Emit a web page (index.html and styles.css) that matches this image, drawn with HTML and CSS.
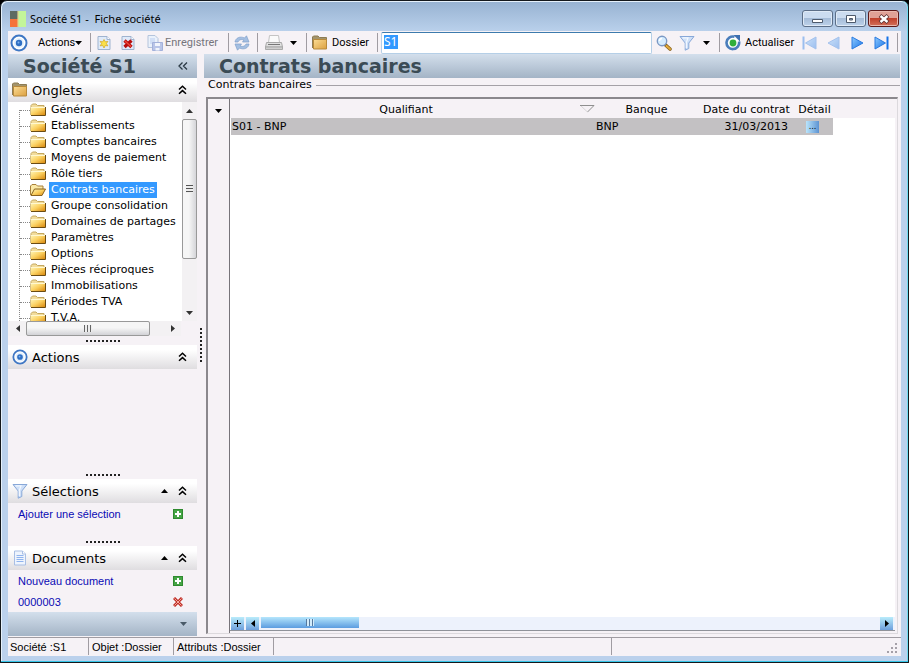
FILE: index.html
```
<!DOCTYPE html>
<html lang="fr">
<head>
    <meta charset="UTF-8">
    <meta name="viewport" content="width=device-width, initial-scale=1.0">
    <title>Société S1 - Fiche société</title>
    <link rel="stylesheet" href="styles.css">
</head>
<body>
<svg class="defs" aria-hidden="true">
    <defs>
        <linearGradient id="gold" x1="0" y1="0" x2="1" y2="1"><stop offset="0" stop-color="#fff6b8"/><stop offset=".5" stop-color="#fbd060"/><stop offset="1" stop-color="#d98a10"/></linearGradient>
        <linearGradient id="gold2" x1="0" y1="0" x2="1" y2="1"><stop offset="0" stop-color="#fbdc94"/><stop offset="1" stop-color="#dca040"/></linearGradient>
        <linearGradient id="nav" x1="0" y1="0" x2="1" y2="1"><stop offset="0" stop-color="#8fcbff"/><stop offset="1" stop-color="#1672e6"/></linearGradient>
        <symbol id="folder" viewBox="0 0 16 14">
            <path d="M1 12V2.500L2.500 1H6L7.500 2.500H14V5H1Z" fill="#f2dc9c" stroke="#c4a860"/>
            <path d="M1 4h14v8H1z" fill="url(#gold)"/>
            <path d="M1 4.500h14" stroke="#fff8d0"/>
            <path d="M1 12.500h14.500V4" fill="none" stroke="#6b4c12"/>
        </symbol>
        <symbol id="folder-open" viewBox="0 0 16 14">
            <path d="M.5 12V3L2 1.500h4L7.500 3h5.500v3" fill="#fbe9a6" stroke="#a8803a"/>
            <path d="M1 12.500L4.500 6H15.500L12 12.500Z" fill="url(#gold)" stroke="#8a6420"/>
        </symbol>
        <symbol id="folder-big" viewBox="0 0 16 16">
            <path d="M.5 13V2L1.500 1h4.500L7.500 2.500h7V6" fill="#a3946c" stroke="#8d7c54"/>
            <path d="M1.500 4.500h13v9.500h-13z" fill="url(#gold2)" stroke="#b88a3c"/>
        </symbol>
        <symbol id="target" viewBox="0 0 18 18">
            <circle cx="9" cy="9" r="7.500" fill="#fff" stroke="#3f77c4" stroke-width="2"/>
            <circle cx="9" cy="9" r="5" fill="#e4f0fc"/>
            <circle cx="9" cy="9" r="3.200" fill="#2f6fc4"/>
            <circle cx="8.500" cy="8.500" r="1" fill="#7fb3ee"/>
        </symbol>
        <symbol id="funnel" viewBox="0 0 16 16">
            <path d="M1 1.500H15L9.800 8V13.500L6.200 15.200V8Z" fill="#cfe0f8" stroke="#88a8d8"/>
            <path d="M3.500 2.800H9L7.300 7.500V13" fill="none" stroke="#f4f9ff" stroke-width="1.200"/>
        </symbol>
        <symbol id="plus" viewBox="0 0 10 10">
            <path d="M0 0h10v10H0z" fill="#2f8a2f"/>
            <path d="M1 1h8v8H1z" fill="#45a545"/>
            <path d="M5 2v6M2 5h6" stroke="#fff" stroke-width="2"/>
        </symbol>
        <symbol id="collapse" viewBox="0 0 9 10">
            <path d="M1 4.500L4.500 1.300L8 4.500M1 8.800L4.500 5.600L8 8.800" fill="none" stroke="#000" stroke-width="1.500"/>
        </symbol>
        <symbol id="up" viewBox="0 0 7 4"><path d="M0 4L3.500 0L7 4Z"/></symbol>
        <symbol id="down" viewBox="0 0 7 4"><path d="M0 0H7L3.500 4Z"/></symbol>
        <symbol id="left" viewBox="0 0 4 7"><path d="M4 0V7L0 3.500Z"/></symbol>
        <symbol id="right" viewBox="0 0 4 7"><path d="M0 0V7L4 3.500Z"/></symbol>
    </defs>
</svg>

<div class="window">
    <header class="titlebar">
        <svg class="logo" viewBox="0 0 16 16">
            <path d="M0 0h8v8H0z" fill="#5f6b62"/>
            <path d="M0 8h8v8H0z" fill="#f5733b"/>
            <path d="M8 0h8v16H8z" fill="#c3f59a"/>
            <path d="M7 0h2v16H7z" fill="#e3cf8c" opacity=".6"/>
        </svg>
        <span class="title">Société S1 -&nbsp; Fiche société</span>
        <div class="win_buttons">
            <button class="win_button" aria-label="Réduire"><svg width="12" height="12" viewBox="0 0 12 12"><path d="M.5 6.500h10v3H.5z" fill="#fff" stroke="#4d5a6c"/></svg></button>
            <button class="win_button" aria-label="Agrandir"><svg width="12" height="12" viewBox="0 0 12 12"><path d="M1.500 2.500h9v7h-9z" fill="#fff" stroke="#4d5a6c"/><path d="M4.500 5.500h3v1.500h-3z" fill="#9ab" stroke="#4d5a6c"/></svg></button>
            <button class="win_button close" aria-label="Fermer"><svg width="12" height="12" viewBox="0 0 12 12"><path d="M2 2.500L10 9.500M10 2.500L2 9.500" stroke="#5b3030" stroke-width="4"/><path d="M2.500 3L9.500 9M9.500 3L2.500 9" stroke="#fff" stroke-width="2.400"/></svg></button>
        </div>
    </header>

    <div class="client">
        <nav class="toolbar">
            <button class="tool target" aria-label="Cible"><svg width="18" height="18"><use href="#target"/></svg></button>
            <button class="tool actions_menu">Actions<svg width="7" height="4"><use href="#down"/></svg></button>
            <span class="sep"></span>
            <button class="tool" aria-label="Nouveau"><svg width="16" height="16" viewBox="0 0 16 16"><path d="M2 1.500h9l3 3v10H2z" fill="#dfeafa" stroke="#9fb3cf"/><path d="M11 1.500v3h3" fill="#fff" stroke="#9fb3cf"/><path d="M8 4.500l1.300 2.300 2.600-.4-1.500 2.200 1.500 2.300-2.600-.4L8 13l-1.300-2.500-2.600.4 1.500-2.300-1.500-2.200 2.600.4z" fill="#fbe04a" stroke="#d0a521" stroke-width=".7"/></svg></button>
            <button class="tool" aria-label="Supprimer"><svg width="16" height="16" viewBox="0 0 16 16"><path d="M2 1.500h9l3 3v10H2z" fill="#dfeafa" stroke="#9fb3cf"/><path d="M11 1.500v3h3" fill="#fff" stroke="#9fb3cf"/><path d="M4.500 5.500l7 6.500M11.500 5.500l-7 6.500" stroke="#b80f0f" stroke-width="3.400"/><path d="M5 6l6 5.500" stroke="#f04a3a" stroke-width="1.400"/></svg></button>
            <button class="tool save"><svg width="16" height="16" viewBox="0 0 16 16"><path d="M1 .5h7l3 3v9H1z" fill="#eaf1fb" stroke="#b4c4dc"/><path d="M3 4h5M3 6h5M3 8h3" stroke="#b9cdf0"/><path d="M5.500 7.500h10v8h-10z" fill="#b9c5e8" stroke="#a3b1da"/><path d="M8 8h5v3H8zM8.500 13h4v2.500h-4z" fill="#f2f5fc"/></svg>Enregistrer</button>
            <span class="sep"></span>
            <button class="tool refresh" aria-label="Rafraîchir"><svg width="16" height="16" viewBox="0 0 16 16"><path d="M1 7C1.500 3 6 .8 10.500 3L12.500 .8 15 7H8.500L10 5C7 3.800 4.500 5 4 7Z" fill="#a4bfe2" stroke="#7f9fca" stroke-width=".7"/><path d="M15 9C14.500 13 10 15.200 5.500 13L3.500 15.200 1 9H7.500L6 11C9 12.200 11.500 11 12 9Z" fill="#a4bfe2" stroke="#7f9fca" stroke-width=".7"/></svg></button>
            <span class="sep"></span>
            <button class="tool print" aria-label="Imprimer"><svg width="18" height="16" viewBox="0 0 18 16"><path d="M4.500 .5h9l1 7h-11z" fill="#fafafa" stroke="#c4c4c4"/><path d="M1.500 7.500h15l1 4.500H.5z" fill="#e0e0e0" stroke="#a8a8a8"/><path d="M3 9.500h12" stroke="#777"/><path d="M.5 12h17v2.500H.5z" fill="#cfcfcf" stroke="#aaa"/></svg><svg width="7" height="4"><use href="#down"/></svg></button>
            <span class="sep"></span>
            <button class="tool folder_button"><svg width="16" height="16"><use href="#folder-big"/></svg>Dossier</button>
            <span class="sep"></span>
            <label class="search"><input type="text" value="S1" aria-label="Recherche"></label>
            <button class="tool find" aria-label="Rechercher"><svg width="16" height="16" viewBox="0 0 16 16"><path d="M9 9.500l5 4.500" stroke="#8a6420" stroke-width="3.600" stroke-linecap="round"/><path d="M10.500 11l3.500 3" stroke="#e2aa3a" stroke-width="2" stroke-linecap="round"/><circle cx="6" cy="6" r="4.700" fill="#d4ecff" stroke="#7b98c4" stroke-width="1.400"/><path d="M3.500 6A2.500 2.500 0 0 1 6 3.500" fill="none" stroke="#fff" stroke-width="1.300"/></svg></button>
            <button class="tool filter" aria-label="Filtrer"><svg width="16" height="16"><use href="#funnel"/></svg><svg width="7" height="4"><use href="#down"/></svg></button>
            <span class="sep"></span>
            <button class="tool reload"><svg width="16" height="16" viewBox="0 0 16 16"><path d="M9.500 1.700A6.300 6.300 0 1 0 14 6.500" fill="#fff" stroke="#4a7dbb" stroke-width="2.600"/><path d="M8.500 0H15V6.500Z" fill="#3c6fb0"/><circle cx="8" cy="8" r="3.400" fill="#2fae3b"/></svg>Actualiser</button>
            <div class="nav_buttons">
                <button class="tool nav off" aria-label="Premier"><svg width="15" height="14" viewBox="0 0 15 14"><path d="M1.500 .5v13" stroke="#1672e6" stroke-width="2"/><path d="M14 1v12L3.500 7z" fill="url(#nav)" stroke="#2b7be0"/></svg></button>
                <button class="tool nav off" aria-label="Précédent"><svg width="15" height="14" viewBox="0 0 15 14"><path d="M13 1v12L2 7z" fill="url(#nav)" stroke="#2b7be0"/></svg></button>
                <button class="tool nav" aria-label="Suivant"><svg width="15" height="14" viewBox="0 0 15 14"><path d="M2 1v12l11-6z" fill="url(#nav)" stroke="#2b7be0"/></svg></button>
                <button class="tool nav" aria-label="Dernier"><svg width="15" height="14" viewBox="0 0 15 14"><path d="M1 1v12l10.500-6z" fill="url(#nav)" stroke="#2b7be0"/><path d="M13.500 .5v13" stroke="#1672e6" stroke-width="2"/></svg></button>
            </div>
            <span class="sep last"></span>
        </nav>

        <div class="content">
            <aside class="sidebar">
                <div class="band"><h1>Société S1</h1><button class="fold" aria-label="Replier"><svg width="10" height="8" viewBox="0 0 10 8"><path d="M4.500 .5L1 4l3.500 3.500M9 .5L5.500 4 9 7.500" fill="none" stroke="#2b3a45" stroke-width="1.300"/></svg></button></div>

                <section class="panel onglets">
                    <h2 class="panel_head"><svg width="16" height="16"><use href="#folder-big"/></svg>Onglets<svg class="end" width="9" height="10"><use href="#collapse"/></svg></h2>
                    <div class="tree_box">
                        <ul class="tree">
                            <li><svg><use href="#folder"/></svg><a href="#">Général</a></li>
                            <li><svg><use href="#folder"/></svg><a href="#">Etablissements</a></li>
                            <li><svg><use href="#folder"/></svg><a href="#">Comptes bancaires</a></li>
                            <li><svg><use href="#folder"/></svg><a href="#">Moyens de paiement</a></li>
                            <li><svg><use href="#folder"/></svg><a href="#">Rôle tiers</a></li>
                            <li class="selected"><svg><use href="#folder-open"/></svg><a href="#">Contrats bancaires</a></li>
                            <li><svg><use href="#folder"/></svg><a href="#">Groupe consolidation</a></li>
                            <li><svg><use href="#folder"/></svg><a href="#">Domaines de partages</a></li>
                            <li><svg><use href="#folder"/></svg><a href="#">Paramètres</a></li>
                            <li><svg><use href="#folder"/></svg><a href="#">Options</a></li>
                            <li><svg><use href="#folder"/></svg><a href="#">Pièces réciproques</a></li>
                            <li><svg><use href="#folder"/></svg><a href="#">Immobilisations</a></li>
                            <li><svg><use href="#folder"/></svg><a href="#">Périodes TVA</a></li>
                            <li><svg><use href="#folder"/></svg><a href="#">T.V.A.</a></li>
                        </ul>
                        <div class="vscroll">
                            <span class="arrow"><svg width="7" height="4"><use href="#up"/></svg></span>
                            <span class="thumb"><i></i></span>
                            <span class="arrow"><svg width="7" height="4"><use href="#down"/></svg></span>
                        </div>
                    </div>
                    <div class="hscroll">
                        <span class="arrow"><svg width="4" height="7"><use href="#left"/></svg></span>
                        <span class="thumb"><i></i></span>
                        <span class="arrow"><svg width="4" height="7"><use href="#right"/></svg></span>
                    </div>
                </section>
                <div class="grip"></div>

                <section class="panel actions">
                    <h2 class="panel_head"><svg width="16" height="16"><use href="#target"/></svg>Actions<svg class="end" width="9" height="10"><use href="#collapse"/></svg></h2>
                </section>
                <div class="grip"></div>

                <section class="panel selections">
                    <h2 class="panel_head"><svg width="16" height="16"><use href="#funnel"/></svg>Sélections<svg class="end" width="7" height="4"><use href="#up"/></svg><svg width="9" height="10"><use href="#collapse"/></svg></h2>
                    <div class="link_row"><a href="#">Ajouter une sélection</a><svg width="10" height="10"><use href="#plus"/></svg></div>
                </section>
                <div class="grip"></div>

                <section class="panel">
                    <h2 class="panel_head"><svg width="16" height="16" viewBox="0 0 16 16"><path d="M2.500 1h8l3 3v11h-11z" fill="#eef4fd" stroke="#a9bfe4"/><path d="M10.500 1v3h3" fill="#fff" stroke="#a9bfe4"/><path d="M4.500 5.500h7M4.500 7.500h7M4.500 9.500h7M4.500 11.500h7" stroke="#90b4ee"/></svg>Documents<svg class="end" width="7" height="4"><use href="#up"/></svg><svg width="9" height="10"><use href="#collapse"/></svg></h2>
                    <div class="link_row"><a href="#">Nouveau document</a><svg width="10" height="10"><use href="#plus"/></svg></div>
                    <div class="link_row"><a href="#">0000003</a><svg width="10" height="10" viewBox="0 0 10 10"><path d="M1 1l8 8M9 1L1 9" stroke="#c03028" stroke-width="3"/><path d="M1.500 1.500l7 7M8.500 1.500l-7 7" stroke="#f4a49a" stroke-width="1"/></svg></div>
                </section>
                <div class="band foot"><svg width="7" height="4"><use href="#down"/></svg></div>
            </aside>

            <div class="splitter"><i></i></div>

            <main class="main">
                <div class="band"><h1>Contrats bancaires</h1></div>
                <fieldset class="group">
                    <legend>Contrats bancaires</legend>
                    <div class="grid_box">
                        <div class="gutter"><svg width="7" height="4"><use href="#down"/></svg></div>
                        <div class="grid">
                            <div class="grid_body">
                                <table>
                                    <colgroup><col class="c_name"><col class="c_bank"><col class="c_date"><col class="c_detail"></colgroup>
                                    <thead>
                                        <tr><th><span class="sorted">Qualifiant<svg width="15" height="8" viewBox="0 0 15 8"><path d="M0 .5H14L7.500 7" fill="none" stroke="#8f8f8f"/><path d="M1 1L7.500 7" stroke="#d8d6d8"/></svg></span></th><th>Banque</th><th>Date du contrat</th><th>Détail</th></tr>
                                    </thead>
                                    <tbody>
                                        <tr><td>S01 - BNP</td><td>BNP</td><td class="date">31/03/2013</td><td class="detail"><button>...</button></td></tr>
                                    </tbody>
                                </table>
                            </div>
                            <div class="grid_scroll">
                                <button aria-label="Ajouter"><svg width="9" height="9" viewBox="0 0 9 9"><path d="M4.500 1v7M1 4.500h7" stroke="#000"/></svg></button>
                                <button aria-label="Gauche"><svg width="4" height="7"><use href="#left"/></svg></button>
                                <span class="blue_thumb"><i></i></span>
                                <button class="far" aria-label="Droite"><svg width="4" height="7"><use href="#right"/></svg></button>
                            </div>
                        </div>
                    </div>
                </fieldset>
            </main>
        </div>

        <footer class="status">
            <span class="s_company">Société :S1</span>
            <span class="s_object">Objet :Dossier</span>
            <span class="s_attr">Attributs :Dossier</span>
            <span class="s_blank"></span>
            <span class="s_rest"><svg width="11" height="11" viewBox="0 0 11 11"><path d="M8 0h2v2H8zM4 4h2v2H4zM8 4h2v2H8zM0 8h2v2H0zM4 8h2v2H4zM8 8h2v2H8z" fill="#a5a0a8"/></svg></span>
        </footer>
    </div>
</div>
</body>
</html>
```
FILE: styles.css
```
* {
    box-sizing: border-box;
}
body {
    margin: 0;
    background: #000;
    font-family: "DejaVu Sans", Verdana, sans-serif;
    font-size: 11px;
    color: #000;
}
svg {
    display: block;
    flex: none;
}
.defs {
    position: absolute;
    width: 0;
    height: 0;
}
button {
    font: inherit;
    color: inherit;
    padding: 0;
    border: 0;
    background: none;
}
ul, h1, h2 {
    margin: 0;
    padding: 0;
}

/* window frame */
.window {
    display: flex;
    flex-direction: column;
    height: 100vh;
    padding: 1px 7px 6px;
    border: 1px solid #14181c;
    border-radius: 7px 7px 0 0;
    background: #bbd1ec;
    box-shadow: inset 0 -1px #35c5e8, inset -1px 0 #6fdcf0, inset 1px 1px #e6f1fb;
}
.titlebar {
    display: flex;
    align-items: center;
    height: 29px;
    margin: 0 -6px;
    padding: 4px 8px 0;
    border-radius: 6px 6px 0 0;
    background: linear-gradient(#98b3d2, #b9d0eb);
    font-family: "Noto Sans", Tahoma, sans-serif;
}
.logo {
    width: 16px;
    height: 16px;
}
.title {
    margin-left: 4px;
}
.win_buttons {
    display: flex;
    gap: 2px;
    margin-left: auto;
}
.win_button {
    display: flex;
    align-items: center;
    justify-content: center;
    width: 31px;
    height: 17px;
    border: 1px solid #5c6f88;
    border-radius: 3px;
    background: linear-gradient(#cbdcf0 50%, #a5bcd8 50%, #bdd2ea);
    box-shadow: inset 0 0 0 1px #dfeaf6;
}
.win_button.close {
    border-color: #5c1a1a;
    background: linear-gradient(#e0a196 50%, #c0412c 50%, #d2705a);
    box-shadow: inset 0 0 0 1px #e9b8ae;
}
.client {
    display: flex;
    flex-direction: column;
    flex: 1;
    min-height: 0;
    background: #f6f2f6;
}

/* toolbar */
.toolbar {
    display: flex;
    align-items: center;
    height: 23px;
    padding-left: 2px;
    font-family: Roboto, Tahoma, sans-serif;
}
.tool {
    display: flex;
    align-items: center;
    gap: 4px;
    height: 20px;
    padding: 0 4px;
    white-space: nowrap;
}
.tool.target {
    padding: 0 10px 0 0;
}
.tool.actions_menu {
    gap: 0;
    justify-content: space-between;
    width: 52px;
    padding: 0 8px 0 0;
}
.tool.save {
    gap: 2px;
    width: 88px;
    padding-left: 7px;
    color: #75757c;
}
.tool.refresh {
    width: 27px;
}
.tool.print {
    gap: 7px;
    width: 47px;
    padding-left: 6px;
}
.tool.folder_button {
    width: 69px;
}
.tool.find {
    width: 27px;
}
.tool.filter {
    gap: 8px;
    width: 40px;
    padding-left: 0;
}
.tool.reload {
    width: 81px;
}
.sep {
    width: 1px;
    height: 19px;
    margin-right: 1px;
    background: #a09ca2;
}
.sep.last {
    margin-right: 3px;
}
.search {
    flex: 1;
    margin-left: 2px;
}
.search input {
    display: block;
    width: 100%;
    height: 22px;
    padding: 0 2px 3px;
    border: 1px solid #b5cfe7;
    border-top-color: #3d7bad;
    border-radius: 2px;
    background: linear-gradient(#3399ff, #3399ff) 2px 2px / 14px 14px no-repeat #fff;
    font: 12px "Noto Sans", Tahoma, sans-serif;
    color: #fff;
}
.nav_buttons {
    display: flex;
    gap: 9px;
    margin-right: 8px;
}
.tool.nav {
    padding: 0;
}
.nav.off {
    opacity: .4;
}

/* layout */
.content {
    display: flex;
    flex: 1;
    min-height: 0;
    padding-right: 1px;
}
.band {
    display: flex;
    align-items: center;
    flex: none;
    height: 24px;
    padding: 0 9px 0 15px;
    background: linear-gradient(#d3dfec, #a4b4c6);
}
.band h1 {
    font-size: 19px;
    line-height: 24px;
    color: #3b4b55;
}
.fold {
    margin-left: auto;
}
.band.foot {
    justify-content: flex-end;
    padding-right: 10px;
}
.band.foot svg {
    fill: #4a5a68;
}

/* sidebar */
.sidebar {
    display: flex;
    flex-direction: column;
    width: 189px;
}
.panel_head {
    display: flex;
    align-items: center;
    gap: 4px;
    height: 24px;
    padding: 0 10px 0 4px;
    background: linear-gradient(#fff 20%, #dfdde0);
    font-size: 13px;
    font-weight: normal;
}
.panel_head .end {
    margin-left: auto;
}
.panel_head .end + svg {
    margin-left: 6px;
}
.actions {
    flex: 1;
}
.selections {
    height: 58px;
}
.tree_box {
    display: flex;
    height: 219px;
    overflow: hidden;
    background: #fff;
}
.tree {
    position: relative;
    flex: 1;
    min-width: 0;
    overflow: hidden;
    list-style: none;
}
.tree::before {
    content: "";
    position: absolute;
    left: 11px;
    top: 8px;
    bottom: 0;
    border-left: 1px dotted #888;
}
.tree li {
    display: flex;
    align-items: center;
    height: 16px;
    margin-left: 12px;
    white-space: nowrap;
}
.tree li::before {
    content: "";
    width: 10px;
    border-top: 1px dotted #888;
}
.tree li svg {
    width: 16px;
    height: 14px;
}
.tree a {
    margin-left: 3px;
    padding: 0 2px;
    line-height: 16px;
    color: #000;
    text-decoration: none;
}
.tree .selected a {
    background: #3399ff;
    color: #fff;
}

/* scroll bars */
.vscroll {
    display: flex;
    flex-direction: column;
    width: 15px;
    background: #f3f1f3;
}
.arrow {
    display: flex;
    align-items: center;
    justify-content: center;
    width: 17px;
    height: 17px;
}
.arrow svg {
    fill: #333;
}
.vscroll .arrow {
    width: 15px;
}
.vscroll .arrow:last-child {
    margin-top: auto;
}
.thumb {
    display: flex;
    align-items: center;
    justify-content: center;
    border: 1px solid #999;
    border-radius: 2px;
}
.vscroll .thumb {
    height: 140px;
    background: linear-gradient(90deg, #f6f6f6 45%, #d5d5d9);
}
.vscroll .thumb i {
    width: 7px;
    height: 8px;
    background: repeating-linear-gradient(#555 0 1px, #eee 1px 3px);
}
.hscroll {
    display: flex;
    width: 173px;
    height: 15px;
    padding-left: 1px;
    background: #f3f1f3;
}
.hscroll .arrow {
    height: 15px;
}
.hscroll .thumb {
    width: 124px;
    background: linear-gradient(#f6f6f6 45%, #d2d2d6);
}
.hscroll .thumb i {
    width: 8px;
    height: 7px;
    background: repeating-linear-gradient(90deg, #666 0 1px, #eee 1px 3px);
}
.hscroll .arrow:last-child {
    margin-left: auto;
}
.grip {
    flex: none;
    width: 34px;
    height: 2px;
    margin: 4px auto 3px 78px;
    background: repeating-linear-gradient(90deg, #222 0 2px, transparent 2px 4px);
}
.link_row {
    display: flex;
    align-items: center;
    justify-content: space-between;
    height: 21px;
    padding: 0 14px 0 10px;
    font-family: "Liberation Sans", Arial, sans-serif;
}
.link_row a {
    color: #0a0ab4;
    text-decoration: none;
}
.splitter {
    display: flex;
    align-items: center;
    justify-content: center;
    width: 7px;
}
.splitter i {
    width: 2px;
    height: 34px;
    background: repeating-linear-gradient(#222 0 2px, transparent 2px 4px);
}

/* grid */
.main {
    display: flex;
    flex-direction: column;
    flex: 1;
    min-width: 0;
}
.group {
    display: flex;
    flex-direction: column;
    flex: 1;
    min-width: 0;
    min-height: 0;
    margin: 0;
    padding: 5px 2px 2px;
    border: 0;
    border-top: 1px solid #a5a1a7;
}
.group legend {
    margin-left: -2px;
    padding: 0 4px;
    line-height: 14px;
}
.grid_box {
    display: flex;
    flex: 1;
    border: 2px solid #8b888d;
    border-right: 1px solid #dcd9dd;
    border-bottom: 1px solid #dcd9dd;
}
.gutter {
    width: 22px;
    padding: 10px 0 0 7px;
    border-right: 1px solid #77747a;
}
.grid {
    display: flex;
    flex-direction: column;
    flex: 1;
    min-width: 0;
    margin: 1px 2px 2px 0;
    padding-left: 1px;
    border-bottom: 1px solid #8f9299;
    background: linear-gradient(#f6f2f6, #f6f2f6) 0 0 / 100% 18px no-repeat #fff;
}
.grid_body {
    flex: 1;
}
table {
    width: 602px;
    table-layout: fixed;
    border-collapse: collapse;
}
.c_name {
    width: 364px;
}
.c_bank {
    width: 102px;
}
.c_date {
    width: 98px;
}
th, td {
    height: 17px;
    padding: 0 0 0 1px;
    font-weight: normal;
    line-height: 17px;
    white-space: nowrap;
}
thead th {
    height: 18px;
}
.sorted {
    display: grid;
    grid-template-columns: 1fr 15px;
    align-items: center;
}
tbody tr {
    background: #c3c1c3;
}
td.date {
    padding-right: 7px;
    text-align: right;
}
.detail button {
    display: block;
    width: 13px;
    height: 12px;
    margin: 0 auto 0 10px;
    background: linear-gradient(90deg, #b9e4fb, #5d93d2);
    font-size: 8px;
    line-height: 10px;
}
.grid_scroll {
    display: flex;
    gap: 2px;
    height: 13px;
    background: #edf2fc;
}
.grid_scroll button {
    display: flex;
    align-items: center;
    justify-content: center;
    width: 13px;
    background: linear-gradient(#b9ecfb, #6d9fdc);
}
.blue_thumb {
    display: flex;
    align-items: center;
    justify-content: center;
    width: 98px;
    height: 11px;
    background: linear-gradient(#b5e6fc, #5b9ce0);
}
.blue_thumb i {
    width: 8px;
    height: 7px;
    background: repeating-linear-gradient(90deg, #55789f 0 1px, #d3ecfb 1px 3px);
}
.grid_scroll .far {
    margin: 0 2px 0 auto;
}

/* status bar */
.status {
    display: flex;
    height: 19px;
    margin-top: 1px;
    padding-bottom: 1px;
    border-top: 1px solid #a09ca2;
    font-family: "Liberation Sans", Arial, sans-serif;
    line-height: 18px;
}
.status span {
    padding-left: 2px;
    border-right: 1px solid #a09ca2;
    white-space: nowrap;
}
.status .s_company {
    width: 81px;
}
.status .s_object {
    width: 85px;
    padding-left: 3px;
}
.status .s_attr {
    width: 100px;
    padding-left: 3px;
}
.status .s_blank {
    width: 338px;
}
.status .s_rest {
    display: flex;
    flex: 1;
    align-items: flex-end;
    justify-content: flex-end;
    padding: 0 3px 1px 0;
    border: 0;
}
```
